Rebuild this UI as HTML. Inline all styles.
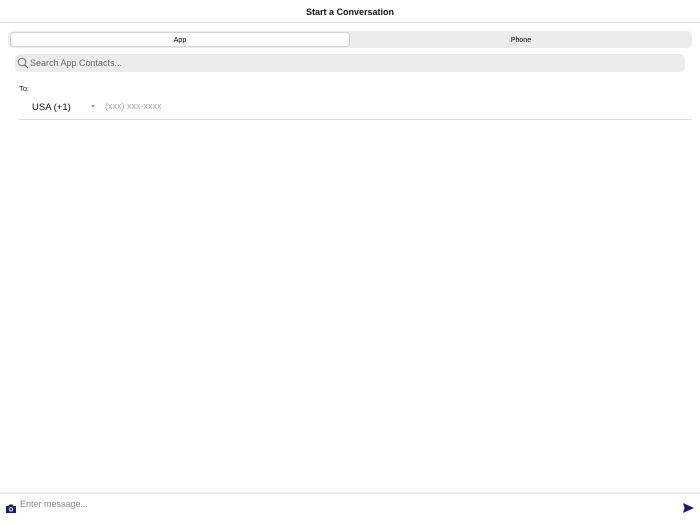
<!DOCTYPE html>
<html><head><style>
*{margin:0;padding:0;box-sizing:border-box}
body{width:700px;height:525px;background:#fff;font-family:"Liberation Sans",sans-serif;position:relative;overflow:hidden}
.hdr{position:absolute;top:0;left:0;width:700px;height:23px;border-bottom:1px solid #dcdcdc;text-align:center;font-size:9px;font-weight:bold;line-height:24px;color:#111}
.seg{position:absolute;top:31px;left:8px;width:684px;height:17px;background:#ececed;border-radius:5px}
.seg .a{position:absolute;left:2px;top:1px;width:340px;height:15px;background:#fff;border-radius:4px;border:1px solid #d4d4d4;text-align:center;font-size:7px;line-height:15px}
.seg .p{position:absolute;left:342px;top:1px;width:342px;text-align:center;font-size:7px;line-height:17px}
.search{position:absolute;top:54px;left:15px;width:670px;height:18px;background:#ececed;border-radius:5px;font-size:9px;color:#6b6b70;line-height:18px;padding-left:15px}
.to{position:absolute;top:84px;left:19px;font-size:7.5px;color:#222}
.usa{position:absolute;top:102px;left:32px;font-size:9.5px;color:#111}
.caret{position:absolute;top:105px;left:91px;width:0;height:0;border-left:2.5px solid transparent;border-right:2.5px solid transparent;border-top:3px solid #999}
.ph{position:absolute;top:101px;left:105px;font-size:9px;color:#aaa}
.line{position:absolute;top:119px;left:19px;width:673px;height:1px;background:#ddd}
.bot{position:absolute;top:492px;left:0;width:700px;height:2px;background:#eee}
.msg{position:absolute;top:499px;left:20px;font-size:9px;color:#888}
</style></head><body>
<div class="hdr">Start a Conversation</div>
<div class="seg"><div class="a">App</div><div class="p">Phone</div></div>
<div class="search">Search App Contacts...</div>
<svg style="position:absolute;top:57px;left:17px" width="12" height="12" viewBox="0 0 12 12"><circle cx="5" cy="5" r="3.8" fill="none" stroke="#6b6b70" stroke-width="1"/><path d="M7.8 7.8L11 11" stroke="#6b6b70" stroke-width="1.1"/></svg>
<div class="to">To:</div>
<div class="usa">USA (+1)</div>
<div class="caret"></div>
<div class="ph">(xxx) xxx-xxxx</div>
<div class="line"></div>
<div class="bot"></div>
<svg style="position:absolute;top:504px;left:6px" width="10" height="9" viewBox="0 0 10 9"><path d="M0 2h2.5l1-1.5h3l1 1.5H10v7H0z" fill="#1a1a6e"/><circle cx="5" cy="5.3" r="1.7" fill="none" stroke="#fff" stroke-width="0.9"/></svg>
<div class="msg">Enter message...</div>
<svg style="position:absolute;top:503px;left:683px" width="11" height="10" viewBox="0 0 11 10"><path d="M0 0L11 5L0 10L1.5 5z" fill="#1a1a6e"/></svg>
</body></html>
